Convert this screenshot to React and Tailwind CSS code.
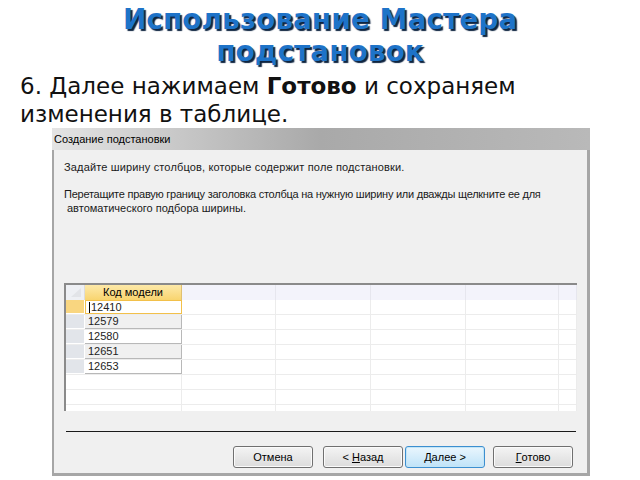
import React from 'react';

const rows = ['12410', '12579', '12580', '12651', '12653', '', '', ''];
const cols = ['w-[94px]', 'w-[95px]', 'w-[95px]', 'w-[93px]', 'flex-1'];

const Btn = ({ children, primary }) => (
  <div
    className={
      'w-[80px] h-[22px] flex items-center justify-center rounded-[3px] text-[11px] text-black border ' +
      (primary
        ? 'border-[#3c8fd0] bg-gradient-to-b from-[#eaf6fd] to-[#bfe3f8] shadow-[inset_0_0_0_1px_#c4e5f6]'
        : 'border-[#707070] bg-gradient-to-b from-[#f4f4f4] to-[#dcdcdc] shadow-[inset_0_0_0_1px_#fbfbfb]')
    }
  >
    {children}
  </div>
);

const App = () => (
  <div className="w-[640px] h-[480px] bg-white overflow-hidden font-['DejaVu_Sans',sans-serif]">
    <h1 className="pt-[4px] text-center text-[28px] leading-[32px] font-bold text-[#1e73c8] [text-shadow:2px_2px_1px_#0e2440]">
      Использование Мастера
      <br />
      подстановок
    </h1>
    <p className="mt-[4px] ml-[20px] text-[23px] leading-[28px] text-[#111]">
      6. Далее нажимаем <b>Готово</b> и сохраняем
      <br />
      изменения в таблице.
    </p>

    <div className="ml-[52px] w-[538px] h-[348px] flex flex-col font-['Liberation_Sans',sans-serif]">
      <div className="h-[22px] shrink-0 flex items-center pl-[2px] text-[11px] text-black bg-gradient-to-r from-[#e4e4e4] via-[#a9a9a9] to-[#b9b9b9]">
        Создание подстановки
      </div>
      <div className="flex-1 flex flex-col bg-[#f0f0f0] border-l-[2px] border-r-[3px] border-b-[3px] border-[#a6a6a6] pl-[10px] pr-[9px]">
        <div className="pt-[10px] text-[11px] leading-[14px] text-[#1a1a1a]">
          <div className="tracking-[0.15px]">Задайте ширину столбцов, которые содержит поле подстановки.</div>
          <div className="mt-[13px] tracking-[-0.25px] whitespace-nowrap">
            Перетащите правую границу заголовка столбца на нужную ширину или дважды щелкните ее для
          </div>
          <div className="pl-[3px]">автоматического подбора ширины.</div>
        </div>

        <div className="mt-[68px] h-[128px] w-[513px] overflow-hidden bg-white border-t-[2px] border-l-[2px] border-[#8a8a8a] flex flex-col">
          <div className="h-[15px] shrink-0 flex bg-[#f3f3fb]">
            <div className="w-[19px] relative border-r border-[#dcdcdc] bg-[#eef0f4]">
              <svg width="19" height="15" viewBox="0 0 19 15" className="absolute inset-0">
                <path d="M5 12 L15 3 L15 12 Z" fill="#e2e4e8" />
              </svg>
            </div>
            <div className="w-[97px] flex items-center justify-center text-[11px] text-black bg-gradient-to-b from-[#fde9a8] to-[#f8d46e] border-r border-[#e0c070]">
              Код модели
            </div>
            {cols.map((c, i) => (
              <div key={i} className={c + ' border-r border-[#e6e6ee]'} />
            ))}
          </div>
          {rows.map((v, i) => (
            <div key={i} className="h-[15px] shrink-0 flex border-b border-[#ececec]">
              <div
                className={
                  'w-[19px] border-r border-b border-white ' +
                  (i === 0 ? 'bg-[#f9d680]' : i < 5 ? 'bg-[#e2e5ea]' : 'bg-white border-[#ececec]')
                }
              />
              <div
                className={
                  'w-[97px] pl-[3px] flex items-center text-[11px] text-[#222] ' +
                  (i === 0
                    ? 'border border-[#f2c04a] bg-white'
                    : i < 5
                    ? 'border-r border-b border-[#b8b8b8] ' + (i % 2 ? 'bg-[#f0f0f0]' : 'bg-white')
                    : 'border-r border-[#ececec]')
                }
              >
                {i === 0 && <span className="w-px h-[11px] bg-black mr-[1px]" />}
                {v}
              </div>
              {cols.map((c, j) => (
                <div key={j} className={c + ' border-r border-[#ececec]'} />
              ))}
            </div>
          ))}
        </div>

        <div className="mt-[20px] ml-[2px] w-[510px] h-px bg-[#1a1a1a]" />

        <div className="mt-[14px] flex justify-end pr-[5px]">
          <Btn>Отмена</Btn>
          <div className="ml-[10px]">
            <Btn>
              &lt;<span className="ml-[3px] underline">Н</span>азад
            </Btn>
          </div>
          <div className="ml-[2px]">
            <Btn primary>
              <span className="underline">Д</span>алее &gt;
            </Btn>
          </div>
          <div className="ml-[8px]">
            <Btn>
              <span className="underline">Г</span>отово
            </Btn>
          </div>
        </div>
      </div>
    </div>
  </div>
);

export default App;
